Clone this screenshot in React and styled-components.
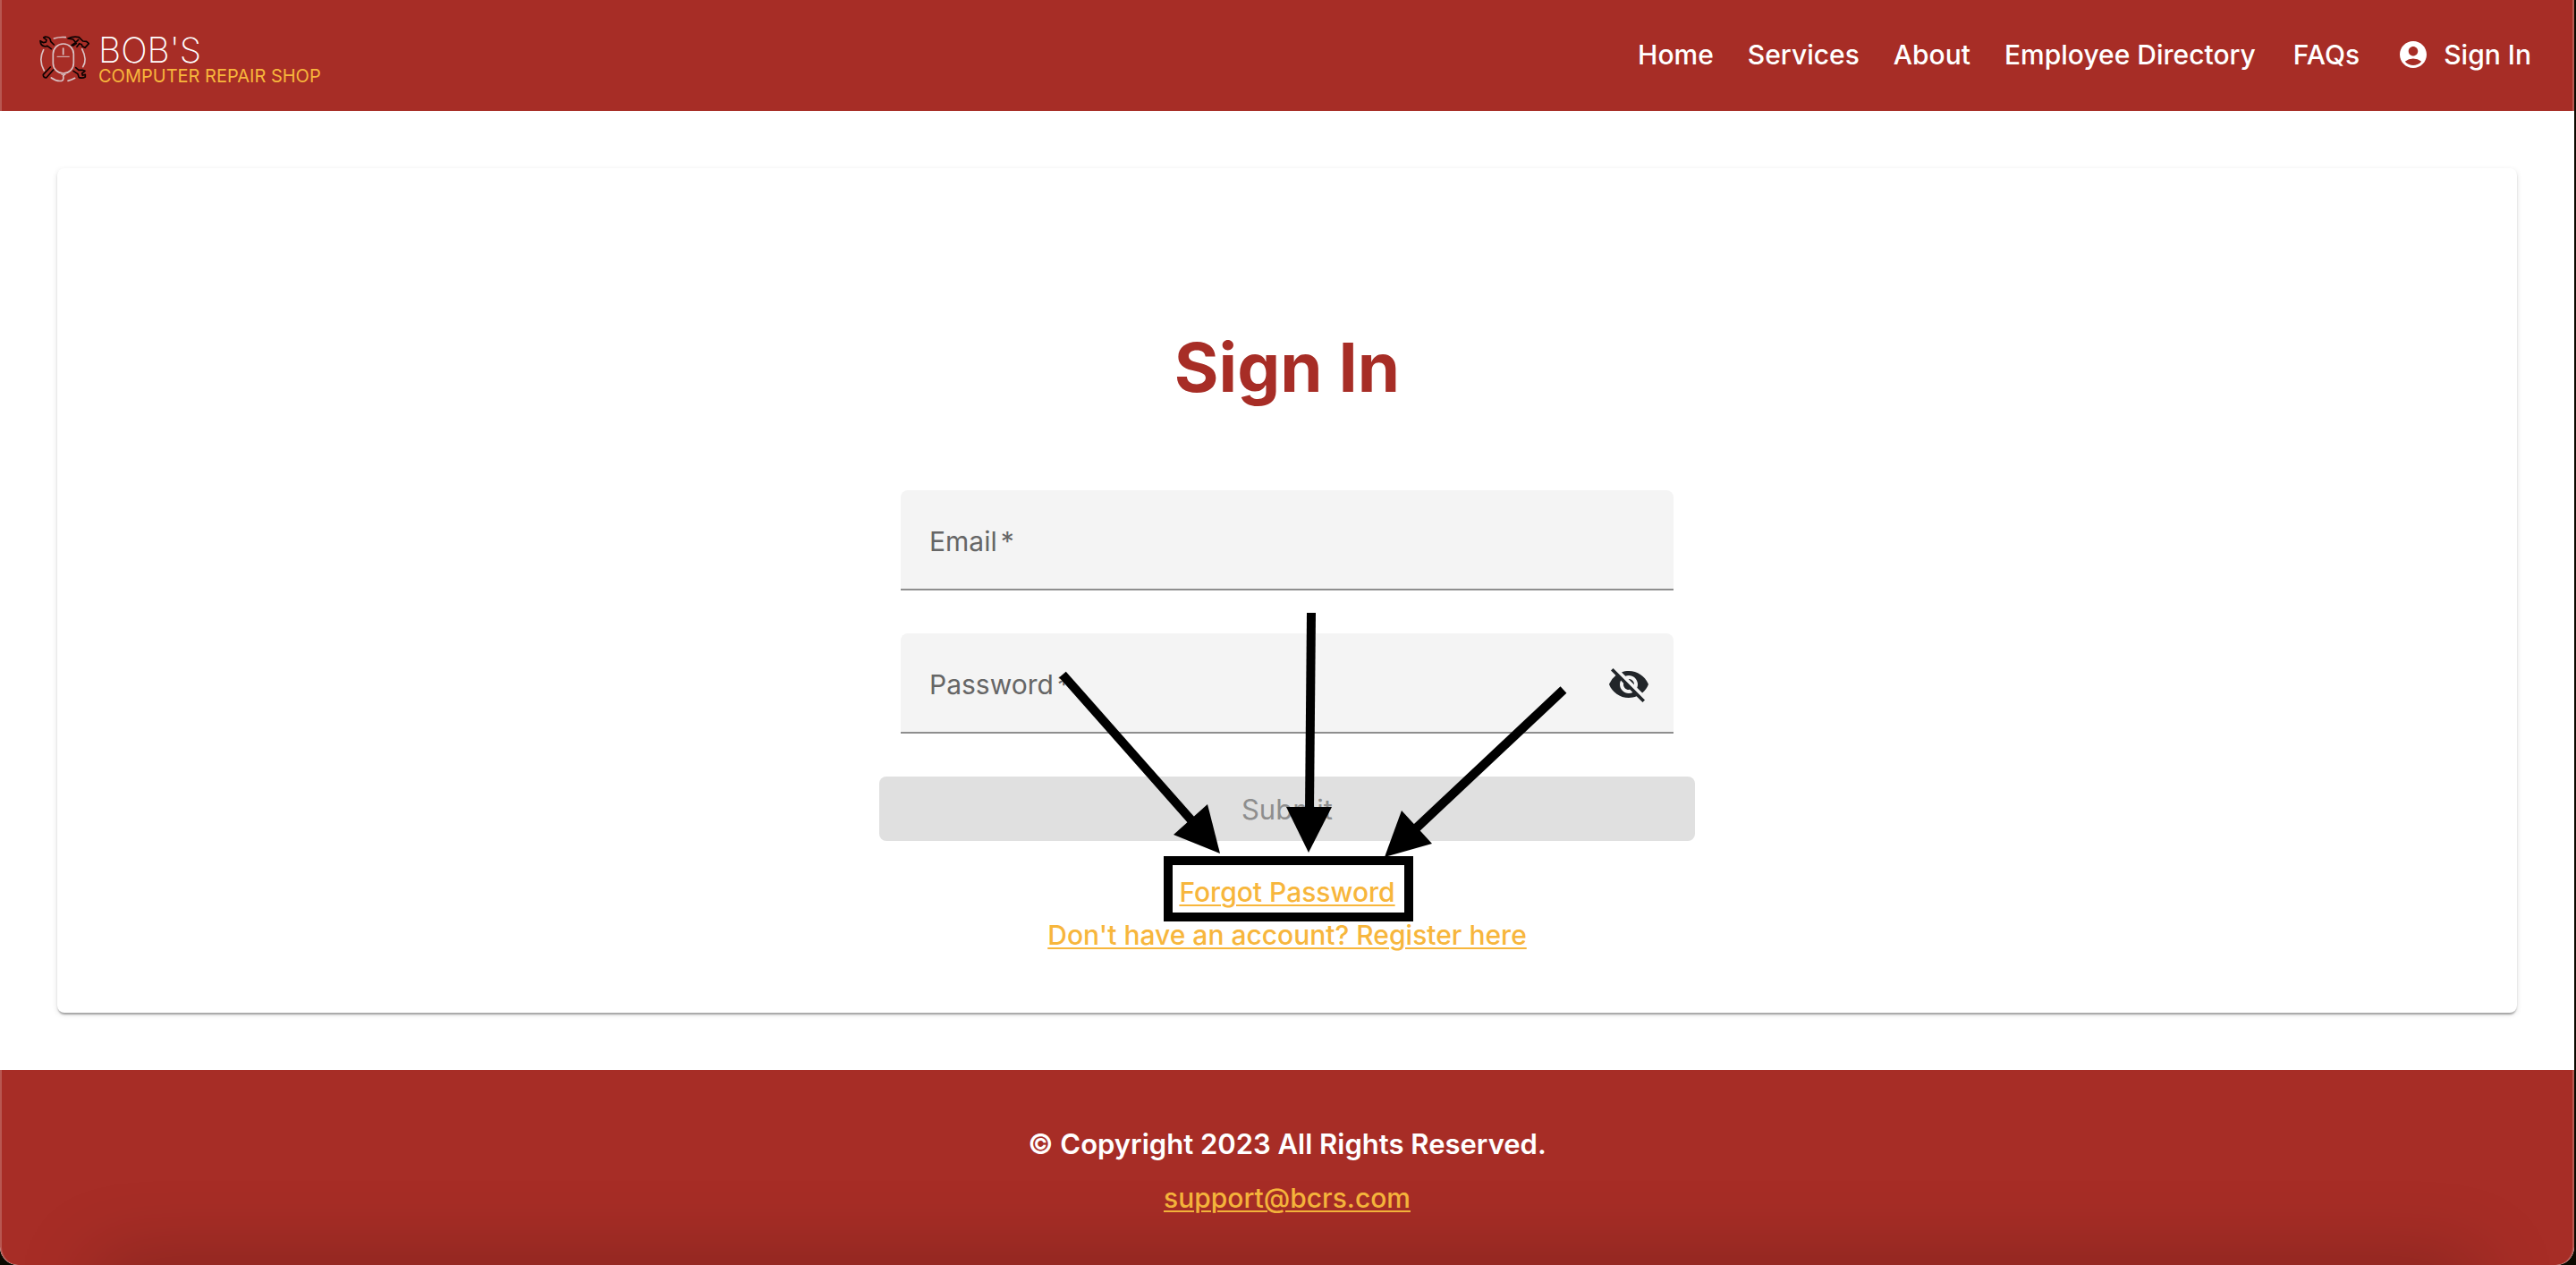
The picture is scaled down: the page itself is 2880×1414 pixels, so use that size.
import React, { useState } from "react";
import styled, { createGlobalStyle, ThemeProvider } from "styled-components";
import { MdAccountCircle, MdVisibilityOff, MdVisibility } from "react-icons/md";

const theme = {
  brand: "#a72d26",
  accent: "#f7b63c",
  surface: "#ffffff",
  field: "#f4f4f4",
  text: "#212529",
  muted: "#666666",
  font: `Inter, "Liberation Sans", sans-serif`,
};

const GlobalStyle = createGlobalStyle`
  *, *::before, *::after { box-sizing: border-box; }
  body {
    margin: 0;
    background: #0c0900;
    color: ${theme.text};
    font-family: ${theme.font};
    font-size: 30px;
    line-height: 48px;
  }
`;

const Window = styled.div`
  display: flex;
  flex-direction: column;
  min-height: 100vh;
  margin-right: 2px;
  overflow: hidden;
  border-radius: 0 0 20px 20px;
  background: ${(p) => p.theme.surface};
`;

const Header = styled.header`
  display: flex;
  justify-content: space-between;
  align-items: flex-start;
  height: 124px;
  padding: 37px 48px 0 44px;
  background: ${(p) => p.theme.brand};
  box-shadow: inset 2px 0 rgba(255, 255, 255, 0.2), inset -2px 0 rgba(255, 255, 255, 0.2);
`;

const Brand = styled.a`
  display: flex;
  align-items: center;
  gap: 10px;
  color: #fff;
  text-decoration: none;
`;

const BrandText = styled.span`
  display: flex;
  flex-direction: column;
`;

const BrandName = styled.span`
  font-size: 39px;
  font-weight: 200;
  line-height: 38px;
`;

const BrandTagline = styled.span`
  color: ${(p) => p.theme.accent};
  font-size: 20px;
  line-height: 20px;
`;

const Nav = styled.nav`
  display: flex;
  align-items: center;
  gap: 38px;
`;

const NavLink = styled.a`
  display: flex;
  align-items: center;
  gap: 16px;
  margin-left: ${(p) => (p.$spaced ? "4px" : "0")};
  color: #fff;
  font-weight: 500;
  text-decoration: none;
  white-space: nowrap;
`;

const Main = styled.main`
  padding: 64px;
`;

const Card = styled.section`
  display: flex;
  flex-direction: column;
  align-items: center;
  padding: 174px 0 63px;
  border-radius: 8px;
  background: ${(p) => p.theme.surface};
  box-shadow: 0 4px 2px -2px rgba(0, 0, 0, 0.2), 0 2px 2px 0 rgba(0, 0, 0, 0.14),
    0 2px 6px 0 rgba(0, 0, 0, 0.12);
`;

const Title = styled.h1`
  margin: 0 0 90px;
  color: ${(p) => p.theme.brand};
  font-size: 76px;
  font-weight: 700;
  line-height: 96px;
`;

const Form = styled.form`
  position: relative;
  display: flex;
  flex-direction: column;
  width: 912px;
`;

const Fields = styled.div`
  display: grid;
  gap: 48px;
  padding: 0 24px;
`;

const Field = styled.div`
  display: grid;
  grid-template-columns: 1fr auto;
  align-items: center;
  height: 112px;
  padding: 4px 26px 0 32px;
  border-bottom: 2px solid #8e8e8e;
  border-radius: 8px 8px 0 0;
  background: ${(p) => p.theme.field};
`;

const Label = styled.label`
  grid-area: 1 / 1;
  color: ${(p) => p.theme.muted};
  pointer-events: none;
`;

const Required = styled.span`
  margin-left: 4px;
`;

const Input = styled.input`
  grid-area: 1 / 1;
  width: 100%;
  padding: 0;
  border: 0;
  outline: 0;
  background: transparent;
  color: ${(p) => p.theme.text};
  font: inherit;
`;

const IconButton = styled.button`
  display: flex;
  padding: 0;
  border: 0;
  background: none;
  color: ${(p) => p.theme.text};
  cursor: pointer;
`;

const Submit = styled.button`
  height: 72px;
  margin: 48px 0 33px;
  padding: 2px 0 0;
  border: 0;
  border-radius: 8px;
  background: #e0e0e0;
  color: #8e8e8e;
  font: inherit;
  font-size: 31px;
`;

const Links = styled.div`
  display: flex;
  flex-direction: column;
  align-items: center;
`;

const AccentLink = styled.a`
  color: ${(p) => p.theme.accent};
  font-weight: 500;
  text-decoration: underline;
  text-decoration-thickness: 2px;
  text-underline-offset: 3px;
`;

const Annotation = styled.svg`
  position: absolute;
  top: 0;
  left: 0;
  width: 912px;
  height: 520px;
  pointer-events: none;
`;

const Footer = styled.footer`
  position: relative;
  display: flex;
  flex: 1;
  flex-direction: column;
  align-items: center;
  gap: 12px;
  padding: 59px 0 51px;
  overflow: hidden;
  border-radius: 0 0 20px 20px;
  background: ${(p) => p.theme.brand};
  box-shadow: inset 2px 0 rgba(255, 255, 255, 0.2), inset -2px 0 rgba(255, 255, 255, 0.2);

  &::after {
    content: "";
    position: absolute;
    right: 110px;
    bottom: -60px;
    left: 110px;
    height: 60px;
    box-shadow: 0 0 90px rgba(0, 0, 0, 0.25);
    pointer-events: none;
  }
`;

const Copyright = styled.span`
  color: #fff;
  font-size: 31px;
  font-weight: 600;
`;

const LogoMark = () => (
  <svg width="56" height="52" viewBox="42 48 168 156" fill="none" strokeLinecap="round" strokeLinejoin="round" aria-hidden="true">
    <g stroke="#d9c3c5" strokeWidth="5">
      <rect x="88" y="75" width="69" height="99" rx="34" />
      <path d="M91 57 Q110 51 130 53" />
      <path d="M56 95 Q38 130 58 165" />
      <path d="M185 92 Q204 130 188 152" />
      <path d="M82 189 Q100 202 117 199 Q125 196 122 184 L125 178" />
      <path d="M138 199 Q151 196 161 190" />
      <path d="M122 90 V110" />
      <path d="M102 118 H142" strokeWidth="3" />
      <path d="M116 178 Q123 184 130 178" strokeWidth="3" />
    </g>
    <g stroke="#0d0202" strokeWidth="5">
      <path d="M91 78 L80 67 Q80 52 62 51 L56 54 L66 62 L64 69 L56 71 L45 65 Q46 83 62 84 L69 82 L82 92" />
      <path d="M138 57 Q157 48 175 53 L188 66 L200 67 L208 74 L195 88 L186 83 L184 77 L176 74 L168 85 M138 57 L155 60 L164 70 L150 80 M164 70 L173 61 M155 81 L166 74" />
      <path d="M79 153 L55 178 Q54 188 65 189 L89 162" />
      <path d="M164 155 L174 163 L186 163 L195 166 L185 174 L187 181 L196 178 L196 186 Q188 192 175 188 L171 176 L156 166" />
    </g>
  </svg>
);

const navItems = [
  { label: "Home" },
  { label: "Services" },
  { label: "About" },
  { label: "Employee Directory" },
  { label: "FAQs", spaced: true },
];

export default function App() {
  const [email, setEmail] = useState("");
  const [password, setPassword] = useState("");
  const [hidden, setHidden] = useState(true);

  return (
    <ThemeProvider theme={theme}>
      <GlobalStyle />
      <Window>
        <Header>
          <Brand href="#home">
            <LogoMark />
            <BrandText>
              <BrandName>BOB'S</BrandName>
              <BrandTagline>COMPUTER REPAIR SHOP</BrandTagline>
            </BrandText>
          </Brand>
          <Nav>
            {navItems.map((item) => (
              <NavLink key={item.label} href="#nav" $spaced={item.spaced}>{item.label}</NavLink>
            ))}
            <NavLink href="#signin" $spaced>
              <MdAccountCircle size={36} />
              Sign In
            </NavLink>
          </Nav>
        </Header>

        <Main>
          <Card>
            <Title>Sign In</Title>
            <Form onSubmit={(e) => e.preventDefault()}>
              <Fields>
                <Field>
                  <Input id="email" type="email" value={email} onChange={(e) => setEmail(e.target.value)} />
                  <Label htmlFor="email">{email ? "" : <>Email<Required>*</Required></>}</Label>
                </Field>
                <Field>
                  <Input
                    id="password"
                    type={hidden ? "password" : "text"}
                    value={password}
                    onChange={(e) => setPassword(e.target.value)}
                  />
                  <Label htmlFor="password">{password ? "" : <>Password<Required>*</Required></>}</Label>
                  <IconButton type="button" aria-label="Toggle password visibility" onClick={() => setHidden(!hidden)}>
                    {hidden ? <MdVisibilityOff size={48} /> : <MdVisibility size={48} />}
                  </IconButton>
                </Field>
              </Fields>
              <Submit type="submit" disabled>Submit</Submit>
              <Links>
                <AccentLink href="#forgot">Forgot Password</AccentLink>
                <AccentLink href="#register">Don't have an account? Register here</AccentLink>
              </Links>
              <Annotation viewBox="0 0 912 520" aria-hidden="true">
                <g stroke="#000" strokeWidth="10" fill="none">
                  <path d="M205 206 L350 370" />
                  <path d="M483 137 L481 358" />
                  <path d="M765 223 L600 378" />
                  <rect x="323" y="414" width="269" height="63" />
                </g>
                <path d="M381 406 L329 385 L367 351 Z" />
                <path d="M480 405 L455 354 L506 354 Z" />
                <path d="M565 410 L584 358 L618 395 Z" />
              </Annotation>
            </Form>
          </Card>
        </Main>

        <Footer>
          <Copyright>© Copyright 2023 All Rights Reserved.</Copyright>
          <AccentLink href="mailto:support@bcrs.com">support@bcrs.com</AccentLink>
        </Footer>
      </Window>
    </ThemeProvider>
  );
}
